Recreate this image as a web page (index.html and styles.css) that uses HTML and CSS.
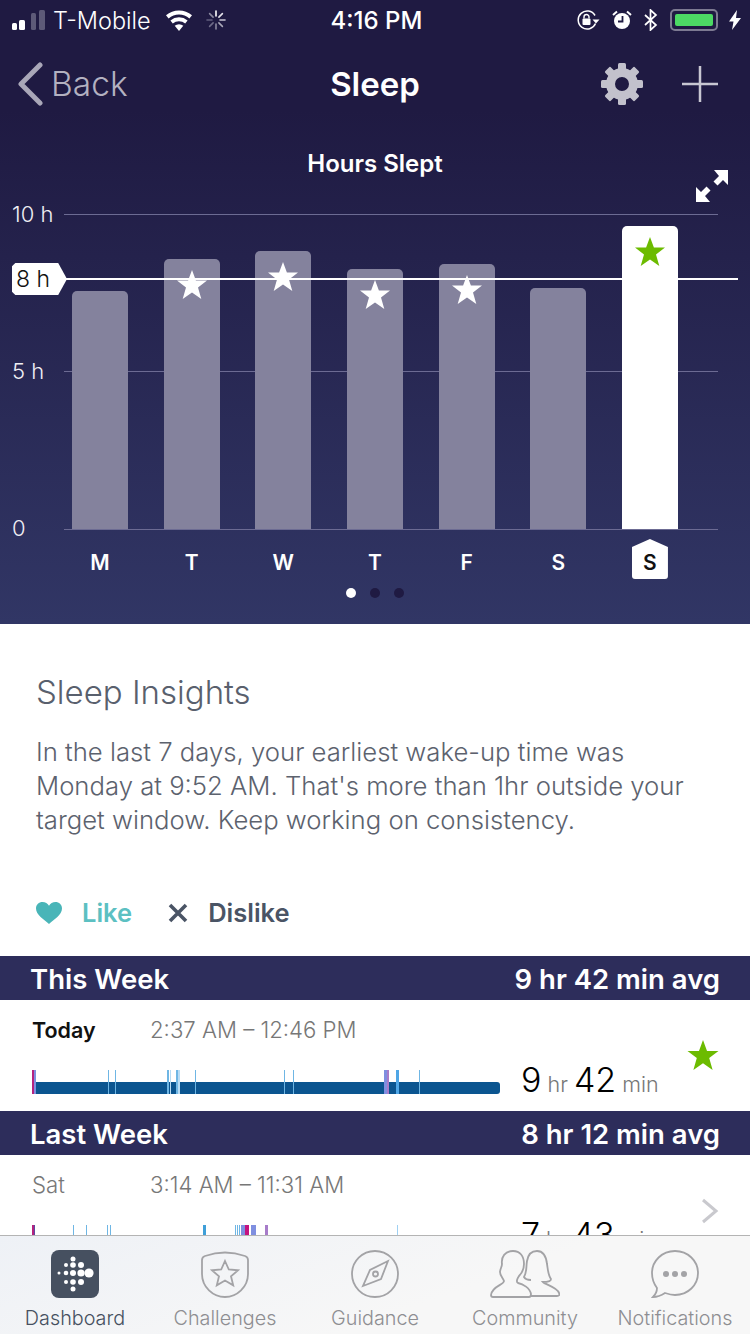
FILE: index.html
```html
<!DOCTYPE html>
<html lang="en">
<head>
<meta charset="UTF-8">
<meta name="viewport" content="width=device-width, initial-scale=1.0">
<title>Sleep</title>
<link rel="stylesheet" href="styles.css">
</head>
<body>
<div class="screen">
    <div class="content">
        <section class="hero">
            <div class="status-bar">
                <div class="status-left">
                    <svg class="signal" width="34" height="20" viewBox="0 0 34 20" fill="#fff">
                        <rect x="0" y="13" width="5" height="7" rx="1.5"/>
                        <rect x="7" y="10" width="6" height="10" rx="1.5"/>
                        <rect x="19" y="3" width="5" height="17" rx="1.5" fill="#5d5a78"/>
                        <rect x="27" y="0" width="6" height="20" rx="1.5" fill="#5d5a78"/>
                    </svg>
                    <span class="carrier">T-Mobile</span>
                    <svg class="wifi" width="28" height="21" viewBox="0 0 28 21" fill="#fff">
                        <path d="M14 21l-4.300-5.200a6.500 6.500 0 0 1 8.600 0z"/>
                        <path d="M7.800 13.400L5.400 10.500a13.300 13.300 0 0 1 17.200 0l-2.400 2.900a9.600 9.600 0 0 0-12.400 0z"/>
                        <path d="M3.600 8.400L1 5.300a20 20 0 0 1 26 0l-2.600 3.100a16 16 0 0 0-20.800 0z"/>
                    </svg>
                    <svg class="spinner" width="20" height="20" viewBox="0 0 20 20" stroke-width="1.600" stroke-linecap="round">
                        <path d="M10 1v5" stroke="#fff"/>
                        <path d="M16.400 3.600l-3.500 3.500" stroke="#e4e3ea"/>
                        <path d="M19 10h-5" stroke="#c6c4d2"/>
                        <path d="M16.400 16.400l-3.500-3.500" stroke="#a9a7b8"/>
                        <path d="M10 19v-5" stroke="#8c8aa0"/>
                        <path d="M3.600 16.400l3.500-3.500" stroke="#6f6c88"/>
                        <path d="M1 10h5" stroke="#625f7d"/>
                        <path d="M3.600 3.600l3.500 3.500" stroke="#8c8aa0"/>
                    </svg>
                </div>
                <span class="clock">4:16 PM</span>
                <div class="status-right">
                    <svg width="24" height="20" viewBox="0 0 24 20">
                        <path d="M19.500 13.500A9 9 0 1 1 19 5.500" fill="none" stroke="#fff" stroke-width="1.500"/>
                        <path d="M16.500 9.500h7L20 13.500z" fill="#fff"/>
                        <rect x="6.500" y="8.500" width="8" height="6.500" rx="1" fill="#fff"/>
                        <path d="M8 8.500V7a2.500 2.500 0 0 1 5 0v1.500" fill="none" stroke="#fff" stroke-width="1.400"/>
                    </svg>
                    <svg width="20" height="20" viewBox="0 0 20 20">
                        <circle cx="10" cy="11" r="8" fill="#fff"/>
                        <path d="M10.500 6v5.500H6" fill="none" stroke="#1f1a42" stroke-width="1.800"/>
                        <path d="M1 5l4-3.500M19 5l-4-3.500" stroke="#fff" stroke-width="2"/>
                    </svg>
                    <svg width="14" height="22" viewBox="0 0 14 22">
                        <path d="M1 6l11 10-5.500 5V1L12 6 1 16" fill="none" stroke="#fff" stroke-width="1.700"/>
                    </svg>
                    <div class="battery"><div class="battery-level"></div></div>
                    <svg class="bolt" width="12" height="20" viewBox="0 0 12 20" fill="#fff">
                        <path d="M8 0L0 11.500h4.500L3 20l9-12H7z"/>
                    </svg>
                </div>
            </div>

            <div class="nav-bar">
                <div class="nav-back">
                    <svg width="26" height="44" viewBox="0 0 26 44">
                        <path d="M23 3L4 22l19 19" fill="none" stroke="#a9a7b8" stroke-width="5" stroke-linecap="round" stroke-linejoin="round"/>
                    </svg>
                    <span>Back</span>
                </div>
                <h1 class="nav-title">Sleep</h1>
                <div class="nav-actions">
                    <svg width="42" height="42" viewBox="0 0 42 42" fill="#c2c1cc">
                        <circle cx="21" cy="21" r="11.500" fill="none" stroke="#c2c1cc" stroke-width="9"/>
                        <rect x="17" y="0" width="8" height="8" rx="1.500"/>
                        <rect x="17" y="0" width="8" height="8" rx="1.500" transform="rotate(45 21 21)"/>
                        <rect x="17" y="0" width="8" height="8" rx="1.500" transform="rotate(90 21 21)"/>
                        <rect x="17" y="0" width="8" height="8" rx="1.500" transform="rotate(135 21 21)"/>
                        <rect x="17" y="0" width="8" height="8" rx="1.500" transform="rotate(180 21 21)"/>
                        <rect x="17" y="0" width="8" height="8" rx="1.500" transform="rotate(225 21 21)"/>
                        <rect x="17" y="0" width="8" height="8" rx="1.500" transform="rotate(270 21 21)"/>
                        <rect x="17" y="0" width="8" height="8" rx="1.500" transform="rotate(315 21 21)"/>
                    </svg>
                    <svg width="36" height="36" viewBox="0 0 36 36">
                        <path d="M18 0v36M0 18h36" stroke="#c8c7d2" stroke-width="2.500"/>
                    </svg>
                </div>
            </div>

            <h2 class="chart-title">Hours Slept</h2>

            <div class="chart">
                <svg class="expand" width="34" height="34" viewBox="0 0 34 34" fill="#fff">
                    <path d="M33 1v15l-5-5-5.500 5.500-4-4L24 7l-5-6z"/>
                    <path d="M1 33V18l5 5 5.500-5.500 4 4L10 27l5 6z"/>
                </svg>
                <span class="axis-label label-10">10 h</span>
                <span class="axis-label label-5">5 h</span>
                <span class="axis-label label-0">0</span>
                <div class="grid-line line-10"></div>
                <div class="grid-line line-5"></div>
                <div class="grid-line line-0"></div>
                <div class="bars">
                    <div class="bar" style="height: 238px"></div>
                    <div class="bar" style="height: 270px"><svg class="star" viewBox="0 0 30 30"><path d="M15 0l3.900 10.600H30l-9 6.900L24.300 29 15 22.400 5.700 29 9 17.500 0 10.600h11.100z"/></svg></div>
                    <div class="bar" style="height: 278px"><svg class="star" viewBox="0 0 30 30"><path d="M15 0l3.900 10.600H30l-9 6.900L24.300 29 15 22.400 5.700 29 9 17.500 0 10.600h11.100z"/></svg></div>
                    <div class="bar" style="height: 260px"><svg class="star" viewBox="0 0 30 30"><path d="M15 0l3.900 10.600H30l-9 6.900L24.300 29 15 22.400 5.700 29 9 17.500 0 10.600h11.100z"/></svg></div>
                    <div class="bar" style="height: 265px"><svg class="star" viewBox="0 0 30 30"><path d="M15 0l3.900 10.600H30l-9 6.900L24.300 29 15 22.400 5.700 29 9 17.500 0 10.600h11.100z"/></svg></div>
                    <div class="bar" style="height: 241px"></div>
                    <div class="bar bar-today" style="height: 303px"><svg class="star" viewBox="0 0 30 30"><path d="M15 0l3.900 10.600H30l-9 6.900L24.300 29 15 22.400 5.700 29 9 17.500 0 10.600h11.100z"/></svg></div>
                </div>
                <div class="goal-line"></div>
                <span class="goal-tag">8 h</span>
            </div>

            <div class="days">
                <span class="day">M</span>
                <span class="day">T</span>
                <span class="day">W</span>
                <span class="day">T</span>
                <span class="day">F</span>
                <span class="day">S</span>
                <span class="day day-today">S</span>
            </div>

            <div class="pager">
                <span class="dot dot-active"></span>
                <span class="dot"></span>
                <span class="dot"></span>
            </div>
        </section>

        <section class="insights">
            <h3>Sleep Insights</h3>
            <p>In the last 7 days, your earliest wake-up time was Monday at 9:52 AM. That's more than 1hr outside your target window. Keep working on consistency.</p>
            <div class="feedback">
                <div class="like">
                    <svg width="26" height="22" viewBox="0 0 26 22">
                        <path fill="#49b5b8" d="M13 22C8 17.500 0 13 0 6.500 0 2.500 3 0 6.500 0 9.300 0 11.800 1.500 13 3.800 14.200 1.500 16.700 0 19.500 0 23 0 26 2.500 26 6.500 26 13 18 17.500 13 22z"/>
                    </svg>
                    <span>Like</span>
                </div>
                <div class="dislike">
                    <svg width="20" height="20" viewBox="0 0 20 20">
                        <path d="M2 2l16 16M18 2L2 18" stroke="#4a5465" stroke-width="3.600"/>
                    </svg>
                    <span>Dislike</span>
                </div>
            </div>
        </section>

        <section class="week">
            <div class="week-head"><span>This Week</span><span>9 hr 42 min avg</span></div>
            <div class="log-row">
                <div class="log-main">
                    <div class="log-top">
                        <span class="log-day log-day-now">Today</span>
                        <span class="log-time">2:37 AM – 12:46 PM</span>
                    </div>
                    <div class="log-bottom">
                        <div class="sleep-track">
                            <div class="sleep-fill"></div>
                            <i class="tick" style="left: 0; width: 2px; background: #b5237f"></i>
                            <i class="tick" style="left: 2px; width: 2px; background: #7f8fe0"></i>
                            <i class="tick" style="left: 76px; background: #6fb6e4"></i>
                            <i class="tick" style="left: 83px; background: #6fb6e4"></i>
                            <i class="tick" style="left: 135px; width: 2px; background: #6fb6e4"></i>
                            <i class="tick" style="left: 138px; background: #b8dcf5"></i>
                            <i class="tick" style="left: 144px; width: 2px; background: #6fb6e4"></i>
                            <i class="tick" style="left: 146px; width: 2px; background: #b8dcf5"></i>
                            <i class="tick" style="left: 163px; background: #6fb6e4"></i>
                            <i class="tick" style="left: 252px; background: #6fb6e4"></i>
                            <i class="tick" style="left: 261px; background: #6fb6e4"></i>
                            <i class="tick" style="left: 352px; width: 3px; background: #7f8fe0"></i>
                            <i class="tick" style="left: 355px; width: 2px; background: #a77cc9"></i>
                            <i class="tick" style="left: 364px; width: 3px; background: #4fa6e6"></i>
                            <i class="tick" style="left: 387px; background: #6fb6e4"></i>
                        </div>
                        <div class="duration"><b>9</b> hr <b>42</b> min</div>
                    </div>
                </div>
                <div class="log-side">
                    <svg class="side-star" width="32" height="31" viewBox="0 0 30 30"><path d="M15 0l3.900 10.600H30l-9 6.900L24.300 29 15 22.400 5.700 29 9 17.500 0 10.600h11.100z"/></svg>
                </div>
            </div>

            <div class="week-head"><span>Last Week</span><span>8 hr 12 min avg</span></div>
            <div class="log-row">
                <div class="log-main">
                    <div class="log-top">
                        <span class="log-day">Sat</span>
                        <span class="log-time">3:14 AM – 11:31 AM</span>
                    </div>
                    <div class="log-bottom">
                        <div class="sleep-track">
                            <div class="sleep-fill"></div>
                            <i class="tick" style="left: 0; width: 2px; background: #b5237f"></i>
                            <i class="tick" style="left: 2px; width: 1px; background: #5a4aa0"></i>
                            <i class="tick" style="left: 41px; background: #6fb6e4"></i>
                            <i class="tick" style="left: 54px; background: #6fb6e4"></i>
                            <i class="tick" style="left: 75px; background: #6fb6e4"></i>
                            <i class="tick" style="left: 78px; background: #6fb6e4"></i>
                            <i class="tick" style="left: 171px; width: 3px; background: #3f9fd8"></i>
                            <i class="tick" style="left: 203px; background: #6fb6e4"></i>
                            <i class="tick" style="left: 205px; background: #6fb6e4"></i>
                            <i class="tick" style="left: 207px; background: #6fb6e4"></i>
                            <i class="tick" style="left: 209px; width: 4px; background: #7f8fe0"></i>
                            <i class="tick" style="left: 213px; width: 4px; background: #c4127f"></i>
                            <i class="tick" style="left: 219px; width: 5px; background: #7f8fe0"></i>
                            <i class="tick" style="left: 233px; width: 3px; background: #a77cc9"></i>
                            <i class="tick" style="left: 365px; background: #9fd0f2"></i>
                        </div>
                        <div class="duration"><b>7</b> hr <b>43</b> min</div>
                    </div>
                </div>
                <div class="log-side">
                    <svg class="chevron" width="18" height="26" viewBox="0 0 18 26">
                        <path d="M2 2l13 11L2 24" fill="none" stroke="#c9c9ce" stroke-width="3"/>
                    </svg>
                </div>
            </div>
        </section>
    </div>

    <nav class="tab-bar">
        <div class="tab tab-active">
            <svg width="48" height="48" viewBox="0 0 48 48">
                <rect width="48" height="48" rx="8" fill="#465060"/>
                <g fill="#fff">
                    <circle cx="22" cy="9" r="2.500"/>
                    <circle cx="15" cy="15" r="2"/><circle cx="22" cy="15" r="2.800"/><circle cx="30" cy="15" r="3"/>
                    <circle cx="8" cy="23" r="1.500"/><circle cx="15" cy="23" r="2.300"/><circle cx="22" cy="23" r="3"/><circle cx="30" cy="23" r="3.600"/><circle cx="38" cy="23" r="4.600"/>
                    <circle cx="15" cy="32" r="2"/><circle cx="22" cy="32" r="2.800"/><circle cx="30" cy="32" r="3"/>
                    <circle cx="22" cy="39" r="2.500"/>
                </g>
            </svg>
            <span>Dashboard</span>
        </div>
        <div class="tab">
            <svg width="48" height="48" viewBox="0 0 48 48" fill="none" stroke="#a3a3a6" stroke-width="1.800">
                <path d="M4 6Q24-1 44 6 47 7 47 10V24C47 37 36 47 24 47 12 47 1 37 1 24V10Q1 7 4 6z"/>
                <path d="M24 11l3.800 8.500 9.200.8-7 6 2.200 9-8.200-4.800-8.200 4.800 2.200-9-7-6 9.200-.8z"/>
            </svg>
            <span>Challenges</span>
        </div>
        <div class="tab">
            <svg width="48" height="48" viewBox="0 0 48 48" fill="none" stroke="#a3a3a6" stroke-width="1.800">
                <circle cx="24" cy="24" r="23"/>
                <path d="M37 11L30 29 12 36l7-16z"/>
                <circle cx="24.500" cy="24" r="2.500"/>
            </svg>
            <span>Guidance</span>
        </div>
        <div class="tab">
            <svg width="70" height="48" viewBox="0 0 70 48" fill="none" stroke="#a3a3a6" stroke-width="1.800">
                <path d="M23 1c-8 0-12 6-11 13 0 3-2 5-2 8 0 4 3 6 4 9 0 4-12 5-13 14 0 1 1 2 2 2h36c1 0 2-1 2-3-1-6-8-10-13-11-2-1-1-4 1-7 3-3 5-6 5-12C34 6 30 1 23 1z"/>
                <path d="M40 46h27c2 0 3-1 2-3-2-6-13-8-16-11 3 0 8 0 8-3-3-4-3-9-4-15C56 5 52 1 47 1c-6 0-9 4-10 10-1 6 0 11-3 16 1 2 4 3 7 3"/>
            </svg>
            <span>Community</span>
        </div>
        <div class="tab">
            <svg width="48" height="48" viewBox="0 0 48 48" fill="none" stroke="#a3a3a6" stroke-width="1.800">
                <path d="M24 1c13 0 23 10 23 22S37 45 24 45c-3 0-7-1-10-2-3 2-7 4-12 4 2-2 4-6 4-9C3 34 1 29 1 23 1 11 11 1 24 1z"/>
                <g fill="#a3a3a6" stroke="none"><circle cx="15" cy="24" r="3"/><circle cx="24" cy="24" r="3"/><circle cx="33" cy="24" r="3"/></g>
            </svg>
            <span>Notifications</span>
        </div>
    </nav>
</div>
</body>
</html>
```

FILE: styles.css
```css
* {
    box-sizing: border-box;
}
html, body {
    margin: 0;
    padding: 0;
}
body {
    font-family: "Inter", "Lato", sans-serif;
    background-color: #fff;
}
.screen {
    width: 750px;
    height: 1334px;
    display: flex;
    flex-direction: column;
    overflow: hidden;
}
.content {
    flex: 1;
    min-height: 0;
    overflow: hidden;
}

/* top dark section */
.hero {
    height: 624px;
    color: #fff;
    background: linear-gradient(#1f1a42 0, #1f1a42 110px, #313665 100%);
}
.status-bar {
    height: 40px;
    padding: 0 9px 0 12px;
    display: flex;
    align-items: center;
    justify-content: space-between;
    position: relative;
}
.status-left, .status-right {
    display: flex;
    align-items: center;
}
.status-left {
    width: 280px;
}
.carrier {
    font-size: 23.500px;
    font-weight: 300;
    margin-left: 7px;
    width: 112px;
    white-space: nowrap;
}
.spinner {
    margin-left: 13px;
}
.clock {
    font-size: 24px;
    font-weight: 500;
}
.status-right {
    width: 280px;
    justify-content: flex-end;
    gap: 12px;
}
.battery {
    width: 48px;
    height: 22px;
    padding: 3px;
    border: 2px solid #7d7a92;
    border-radius: 5px;
    position: relative;
}
.battery-level {
    height: 100%;
    background-color: #4cd964;
    border-radius: 2px;
}
.bolt {
    margin-left: -1px;
}

.nav-bar {
    height: 88px;
    padding: 0 32px 0 17px;
    display: flex;
    align-items: center;
    justify-content: space-between;
    position: relative;
}
.nav-back {
    display: flex;
    align-items: center;
    gap: 8px;
    width: 255px;
    font-size: 33.500px;
    font-weight: 300;
    color: #b3b1c0;
}
.nav-title {
    margin: 0;
    font-size: 33px;
    font-weight: 600;
}
.nav-actions {
    width: 240px;
    display: flex;
    justify-content: flex-end;
    align-items: center;
    gap: 39px;
}

.chart-title {
    margin: 20px 0 0;
    height: 32px;
    line-height: 32px;
    font-size: 24px;
    font-weight: 600;
    text-align: center;
}
.chart {
    margin-top: 34px;
    height: 316px;
    position: relative;
}
.expand {
    position: absolute;
    right: 21px;
    top: -45px;
}
.axis-label {
    position: absolute;
    left: 12px;
    font-size: 22px;
    font-weight: 300;
    line-height: 26px;
    color: #f0eff4;
}
.label-10 { top: -13px; }
.label-5 { top: 144px; }
.label-0 { top: 301px; }
.grid-line {
    position: absolute;
    left: 64px;
    width: 654px;
    height: 1px;
    background-color: #6c6b93;
}
.line-10 { top: 0; }
.line-5 { top: 157px; }
.line-0 { top: 315px; }
.bars {
    position: absolute;
    left: 72px;
    bottom: 1px;
    display: flex;
    align-items: flex-end;
    gap: 35.67px;
}
.bar {
    width: 56px;
    padding-top: 11px;
    display: flex;
    justify-content: center;
    align-items: flex-start;
    background-color: #84829d;
    border-radius: 5px 5px 0 0;
}
.star {
    width: 30px;
    height: 30px;
    fill: #fff;
}
.bar-today {
    background-color: #fff;
}
.bar-today .star {
    fill: #6cbb00;
}
.goal-line {
    position: absolute;
    left: 66px;
    top: 64px;
    width: 672px;
    height: 2px;
    background-color: #fff;
}
.goal-tag {
    position: absolute;
    left: 12px;
    top: 49px;
    width: 55px;
    height: 32px;
    padding-left: 4px;
    line-height: 32px;
    font-size: 23px;
    font-weight: 300;
    color: #111;
    background-color: #fff;
    clip-path: polygon(6% 0, 84% 0, 100% 50%, 84% 100%, 6% 100%, 0 90%, 0 10%);
}

.days {
    margin-left: 72px;
    padding-top: 9px;
    display: flex;
    gap: 35.67px;
}
.day {
    width: 56px;
    height: 40px;
    line-height: 47px;
    text-align: center;
    font-size: 21px;
    font-weight: 600;
}
.day-today {
    width: 36px;
    margin: 0 10px;
    color: #111;
    background-color: #fff;
    border-radius: 3px;
    clip-path: polygon(50% 0, 100% 20%, 100% 100%, 0 100%, 0 20%);
}
.pager {
    margin-top: 9px;
    display: flex;
    justify-content: center;
    gap: 14px;
}
.dot {
    width: 10px;
    height: 10px;
    border-radius: 50%;
    background-color: #1f1a42;
}
.dot-active {
    background-color: #fff;
}

/* insights */
.insights {
    height: 332px;
    padding: 46px 36px 0;
}
.insights h3 {
    margin: 0;
    font-size: 33px;
    line-height: 44px;
    font-weight: 300;
    color: #59606d;
}
.insights p {
    margin: 21px 0 0;
    font-size: 25.700px;
    line-height: 34px;
    font-weight: 300;
    color: #5c626e;
}
.feedback {
    margin-top: 60px;
    display: flex;
    align-items: center;
    font-size: 25.500px;
    font-weight: 600;
}
.like, .dislike {
    display: flex;
    align-items: center;
    gap: 20px;
}
.like {
    color: #5cc0c2;
    margin-right: 36px;
}
.dislike {
    color: #4a5465;
}

/* sleep log */
.week-head {
    height: 44px;
    padding: 2px 30px 0;
    display: flex;
    align-items: center;
    justify-content: space-between;
    font-size: 27.500px;
    font-weight: 600;
    color: #fff;
    background-color: #2d2d5b;
}
.log-row {
    height: 111px;
    display: flex;
    background-color: #fff;
}
.log-main {
    width: 670px;
    padding: 18px 0 0 32px;
}
.log-top {
    display: flex;
    height: 24px;
    line-height: 24px;
    font-size: 22.200px;
    font-weight: 300;
}
.log-day {
    width: 118px;
    color: #777;
}
.log-day-now {
    color: #111;
    font-size: 21.500px;
    font-weight: 600;
}
.log-time {
    color: #777;
}
.log-bottom {
    margin-top: 28px;
    display: flex;
    align-items: flex-start;
}
.sleep-track {
    width: 468px;
    height: 24px;
    display: flex;
    align-items: flex-end;
    position: relative;
}
.sleep-fill {
    width: 100%;
    height: 12px;
    background-color: #0b5590;
    border-radius: 0 3px 3px 0;
}
.tick {
    position: absolute;
    top: 0;
    bottom: 0;
    width: 1px;
}
.duration {
    margin: -3px 0 0 21px;
    line-height: 26px;
    font-size: 21.500px;
    font-weight: 300;
    color: #777;
    white-space: nowrap;
}
.duration b {
    font-size: 34px;
    font-weight: 300;
    color: #000;
}
.log-side {
    flex: 1;
    display: flex;
    align-items: center;
    justify-content: center;
}
.side-star {
    fill: #6cbb00;
    margin-left: -14px;
}

/* bottom tabs */
.tab-bar {
    height: 99px;
    flex-shrink: 0;
    display: flex;
    border-top: 1px solid #b4b4b4;
    background: linear-gradient(160deg, #eef1f6 0, #f7f7f7 60%);
}
.tab {
    width: 150px;
    padding-top: 14px;
    display: flex;
    flex-direction: column;
    align-items: center;
    gap: 7px;
    font-size: 19.800px;
    font-weight: 300;
    line-height: 26px;
    color: #8e8e92;
}
.tab-active {
    color: #465060;
}
```
